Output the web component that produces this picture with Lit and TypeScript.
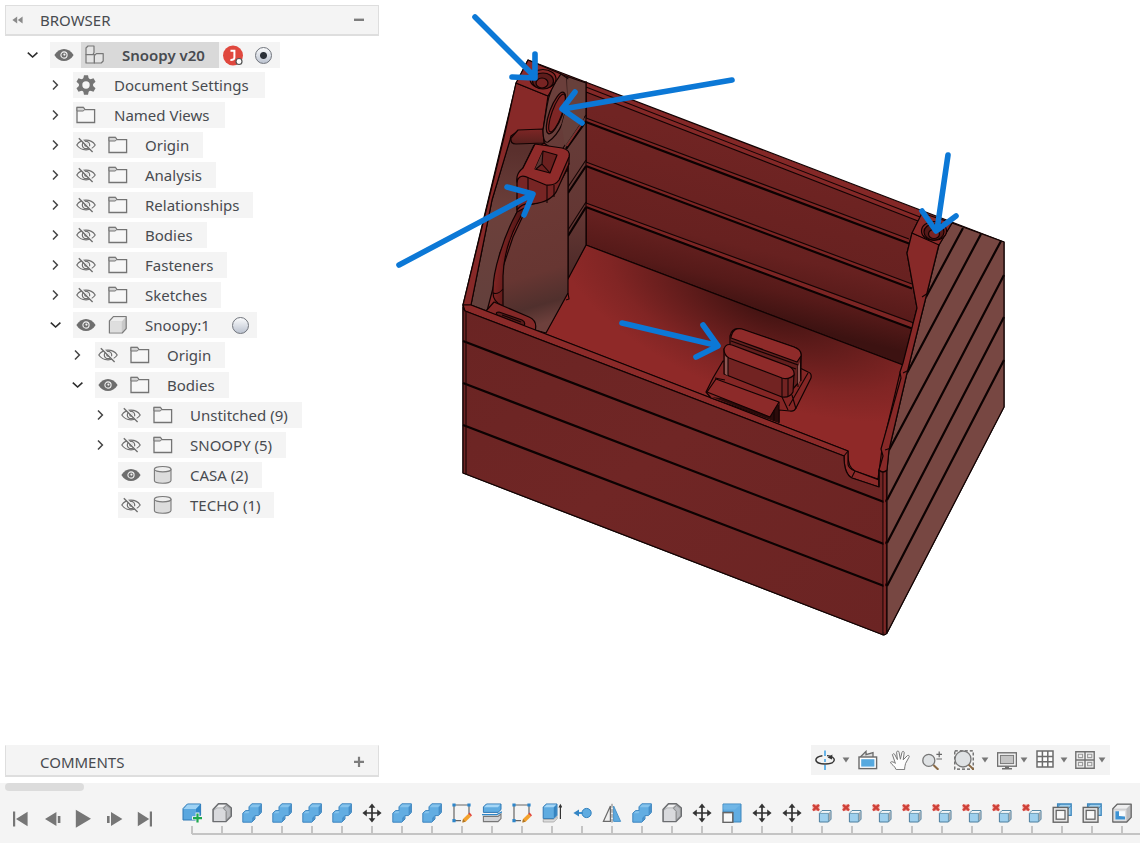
import { LitElement, html, svg, css, nothing, TemplateResult } from "lit";
import { customElement, property } from "lit/decorators.js";

type Art = TemplateResult;

const GREY = "#767676";

/* ---------- 20 x 20 glyphs ---------- */
const art: Record<string, Art> = {
  eye: svg`<path d="M0.4 10C5 2 15 2 19.6 10C15 18 5 18 0.4 10Z" fill="#6e6e6e"/>
    <circle cx="10" cy="10" r="3.1" fill="#6e6e6e" stroke="#f4f4f4" stroke-width="1.1"/><circle cx="10.4" cy="9.6" r="1.1" fill="#f4f4f4"/>`,
  eyeOff: svg`<g fill="none" stroke="#6f6f6f" stroke-width="1.2"><path d="M0.8 10C5 3.6 15 3.6 19.2 10C15 16.4 5 16.4 0.8 10Z"/>
    <circle cx="10" cy="10" r="3.7"/><circle cx="10" cy="10" r="1.2"/></g>
    <path d="M3.8 2.6L17.4 16.2" stroke="#f4f4f4" stroke-width="1.6"/><path d="M2.8 3.2L16.6 17" stroke="#6f6f6f" stroke-width="1.4"/>`,
  folder: svg`<path d="M1 17.5V2.4H7.4L9 4.6H18.6V17.5Z" fill="#f7f7f7" stroke="#747474" stroke-width="1.3"/>
    <path d="M1 2.4H7.4L8.6 4.4L7.4 6H1Z" fill="#d4d4d4" stroke="#747474" stroke-width="1"/>`,
  gear: svg`<g fill="#757575"><circle cx="10" cy="10" r="7.2"/>
    ${[0, 60, 120, 180, 240, 300].map(a => svg`<path d="M7.2 4L8 0.2H12L12.8 4Z" transform=${`rotate(${a} 10 10)`}/>`)}</g>
    <circle cx="10" cy="10" r="3.7" fill="#f5f5f5"/>`,
  assembly: svg`<g fill="#e4e4e4" stroke="#777" stroke-width="1.2" stroke-linejoin="round">
    <path d="M1 9.6V3L3 1H9V7.6L8 9.6Z"/><path d="M1 9.6H9.4V18H1Z"/><path d="M9.4 18V10.6L11.4 8.6H18.2V16L16.2 18Z"/></g>`,
  component: svg`<path d="M1.4 18V6L5.4 1.6H18.2V13.6L14.2 18Z" fill="#c9c9c9" stroke="#7a7a7a" stroke-width="1.2" stroke-linejoin="round"/>
    <path d="M2 6.4H13.8L17.6 2.2H5.8Z" fill="#eee"/><path d="M2 6.4H13.8V17.4H2Z" fill="#dedede"/>`,
  body: svg`<path d="M1.4 4.4V15.6C1.4 19.2 18 19.2 18 15.6V4.4Z" fill="#dcdcdc" stroke="#7a7a7a" stroke-width="1.1"/>
    <ellipse cx="9.7" cy="4.2" rx="8.3" ry="2.7" fill="#eee" stroke="#7a7a7a" stroke-width="1.1"/>`,
  right: svg`<path d="M7 5.4L11.4 10L7 14.6" fill="none" stroke="#444" stroke-width="1.5"/>`,
  down: svg`<path d="M4.8 7.6L9.6 12L14.4 7.6" fill="none" stroke="#2c2c2c" stroke-width="1.6"/>`,
  collapse: svg`<path d="M9.2 6.4V13.6L4.4 10ZM14.6 6.4V13.6L9.8 10Z" fill="#8a8a8a"/>`,
  minus: svg`<path d="M5 8.6H15V11H5Z" fill="#7d7d7d"/>`,
  plus: svg`<path d="M5 8.8H8.9V4.8H11.1V8.8H15V11H11.1V15H8.9V11H5Z" fill="#7d7d7d"/>`,
  /* navigation bar */
  orbit: svg`<path d="M10 0.5V6M10 9V12M10 15V20" stroke="#3aa0e6" stroke-width="1.5"/>
    <path d="M12 5.6C22 6.4 22 13.8 10 14C-2 13.8 -1.4 6.8 7.4 5.7" fill="none" stroke="#333" stroke-width="1.4"/>
    <path d="M12.6 7.4L17.4 4.6L17 9.6Z" fill="#333"/>`,
  lookAt: svg`<path d="M2.4 7L8 1.4V4.6L15 2.6V7" fill="#dcdcdc" stroke="#6a6a6a" stroke-width="1.3"/>
    <rect x="1" y="7" width="17.6" height="11.6" fill="#fff" stroke="#6a6a6a" stroke-width="1.4"/><rect x="3.2" y="9.2" width="13.2" height="7.4" fill="#56a9df"/>`,
  hand: svg`<path d="M6.2 19.6C4.6 15.6 1.4 14.6 0.4 12.4C1.8 11 4 12.2 5.4 13.4L2.4 4.6C3.4 3 4.6 3.8 5 5L7.4 9.6L6.6 2.2C7.2 0.4 8.8 0.8 9 2.2L10.4 9.2L12 2.2C12.8 0.8 14.4 1.4 14.2 2.8L13.2 9.8L17.4 5.6C18.8 5 19.8 6 19 7.2L15.6 13.4C15 16 14.6 17.4 14.6 19.6Z" fill="#fdfdfd" stroke="#777" stroke-width="1"/>`,
  zoom: svg`<circle cx="6.8" cy="10.4" r="6" fill="#dfe2e4" stroke="#777" stroke-width="1.3"/><path d="M11.4 15L16.4 19.8" stroke="#8a6a45" stroke-width="2"/>
    <path d="M14.4 4.4H20M17.2 1.6V7.2M14.4 9H20" stroke="#666" stroke-width="1.2"/>`,
  fit: svg`<rect x="0.8" y="0.8" width="18.4" height="18.4" fill="none" stroke="#555" stroke-width="1.2" stroke-dasharray="3 2"/>
    <circle cx="9" cy="9" r="8" fill="#dfe2e4" stroke="#777" stroke-width="1.3"/><path d="M14.6 14.6L20 20" stroke="#8a6a45" stroke-width="2"/>`,
  display: svg`<rect x="0.6" y="2.8" width="18.8" height="13.4" fill="#f6f6f6" stroke="#707070" stroke-width="1.4"/>
    <rect x="3.4" y="5.4" width="13.2" height="8.2" fill="#c4c4c4" stroke="#777" stroke-width="1"/><path d="M8 16.4H12V18H15V19.6H5V18H8Z" fill="#707070"/>`,
  grid: svg`<path d="M2 1H18V17H2ZM2 6.4H18M2 11.8H18M7.4 1V17M12.8 1V17" fill="#fdfdfd" stroke="#6c6c6c" stroke-width="1.5"/>`,
  views: svg`<path d="M0.8 1.8H19.2V18.2H0.8ZM10 1.8V18.2M0.8 10H19.2" fill="#f2f2f2" stroke="#707070" stroke-width="1.4"/>
    <path d="M3.4 4.2H7.6V7.6H3.4ZM12.6 4.2H16.8V7.6H12.6ZM3.4 12.4H7.6V15.8H3.4ZM12.6 12.4H16.8V15.8H12.6Z" fill="#eee" stroke="#9a9a9a" stroke-width="1.1"/>`,
  /* playback */
  first: svg`<path d="M2 2.6H4.2V17.4H2ZM16.6 2.8V17.2L5 10Z" fill="${GREY}"/>`,
  prev: svg`<path d="M14.4 3V17L3 10ZM15.8 7H18.4V14H15.8Z" fill="${GREY}"/>`,
  play: svg`<path d="M2.8 0.8L18 9.8L2.8 18.8Z" fill="${GREY}"/>`,
  next: svg`<path d="M7 3V17L18.4 10ZM3 7H5.6V14H3Z" fill="${GREY}"/>`,
  last: svg`<path d="M14.8 2.6H17V17.4H14.8ZM2.8 2.8V17.2L14.2 10Z" fill="${GREY}"/>`,
  /* timeline features */
  newComp: svg`<path d="M1 17V5.6L5.4 1H18.6V12L14 17Z" fill="#5aa7df" stroke="#2f78b4" stroke-width="1"/><path d="M1.6 6H14L18 1.6H5.6Z" fill="#9ed2f4"/>
    <path d="M14 6L18.4 1.6V12L14 16.6Z" fill="#2f86c9"/>
    <path d="M13.6 9.6H17.4V13.2H20.6V16.8H17.4V20H13.6V16.8H10V13.2H13.6Z" fill="#f4f4f4"/><path d="M14.4 10.6H16.6V14H20V16.2H16.6V19.6H14.4V16.2H11V14H14.4Z" fill="#1fa84e"/>`,
  form: svg`<path d="M1 18.6V6.4L6.4 0.8H14.4L19.4 5V13L14 18.6Z" fill="#a4a6a8" stroke="#6b6d70" stroke-width="1.4" stroke-linejoin="round"/>
    <path d="M2 18V7.6L5 5.2H10.6L13.4 8.2V18Z" fill="#d9dadd"/><path d="M2.4 6.4L6.8 1.8H14L10.6 4.6H5Z" fill="#f1f1f2"/><path d="M14.4 17V8.4L11.6 5.2L14.6 2.4L18.4 5.6V13Z" fill="#b9bbbf" stroke="#85878a" stroke-width=".7"/>`,
  combine: svg`<path d="M0.8 19.2V10.2L3.6 7.6H7V3.8L9.8 0.8H19.4V9.4L16.4 12.6H13V16L9.8 19.2Z" fill="#62ade2" stroke="#3f86bf" stroke-width="1"/>
    <path d="M7.8 4.2H16L18.6 1.4H10.2ZM1.6 10.2H6.6L7.2 8.2H4Z" fill="#86c3ec"/><path d="M16.6 12V4.4L18.9 1.8V9.2ZM10.200 18.400V15L12.4 12.800V15.8Z" fill="#468fc9"/>`,
  move: svg`<path d="M10 3V17M3 10H17" stroke="#333" stroke-width="1.7"/><path d="M10 0.4L13.4 4.8H6.6ZM10 19.6L13.4 15.2H6.6ZM0.4 10L4.8 6.6V13.4ZM19.6 10L15.2 6.6V13.4Z" fill="#333"/>`,
  sketch: svg`<path d="M2 2H17V12M2 2V17.6H9" fill="none" stroke="#666" stroke-width="1.2"/>
    <path d="M0.4 0.4H3.6V3.6H0.4ZM15.4 0.4H18.6V3.6H15.4ZM0.4 16H3.6V19.2H0.4Z" fill="#2d86cb"/>
    <path d="M10.4 19.4L11 16L16.4 10.8L19 13.4L13.6 18.8Z" fill="#f3a12c"/><path d="M16.4 10.8L17.6 9.6L20 12.2L19 13.4Z" fill="#e2433a"/><path d="M10.4 19.4L11 16L13.6 18.8Z" fill="#a9762c"/>`,
  split: svg`<path d="M1.4 9.4V4L4.4 1H19V6.6L16 9.4Z" fill="#5fabe0" stroke="#2f78b4" stroke-width="1"/><path d="M2 4.2H16L18.2 1.6H4.8Z" fill="#a5d6f6"/>
    <path d="M1.4 13.4V18.6H16L19 15.6V11L16 13.4Z" fill="#d2d3d5" stroke="#777" stroke-width="1.1"/><path d="M0 11.6H15L20 8.8" fill="none" stroke="#2e86c8" stroke-width="1.3"/>`,
  extrude: svg`<path d="M1.2 15.6V4L4.4 1H15V12.4L11.8 15.6Z" fill="#5fabe0" stroke="#2f78b4" stroke-width="1"/><path d="M1.8 4.2H11.6L14.4 1.6H4.8Z" fill="#a5d6f6"/><path d="M11.8 4.4L14.6 1.8V12.2L11.8 15Z" fill="#3583c0"/>
    <path d="M1.2 16.4V19H11.8L15.2 15.6V13.4L11.8 16.4Z" fill="#ddd" stroke="#999" stroke-width=".7"/><path d="M18.4 3V16" stroke="#333" stroke-width="1.2"/><path d="M18.4 0.8L20.4 4.6H16.4Z" fill="#333"/>`,
  remove: svg`<path d="M0.6 1.4H7.4V7.8H0.6Z" fill="#f0a29b"/><path d="M1 1.8L7 7.4M7 1.8L1 7.4" stroke="#cf4138" stroke-width="2.3"/>
    <path d="M7.4 19V10.4L10 7.6H19V16.2L16.4 19Z" fill="#9fd0ee" stroke="#4d7f9e" stroke-width="1"/><path d="M7.8 10.2H16.4L18.6 8H10.2Z" fill="#f2f6f8"/><path d="M16.4 10.4L18.6 8.2V16L16.4 18.4Z" fill="#a8aaac"/><path d="M7.4 10.4H16.4V19" fill="none" stroke="#5f8faa" stroke-width=".8"/>`,
  point: svg`<path d="M6 10H13" stroke="#3d92d2" stroke-width="2"/><circle cx="14.6" cy="10" r="4.6" fill="#5fabe0" stroke="#2f7fbd" stroke-width="1"/><path d="M1.4 10L7 6.4V13.6Z" fill="#3485c4"/>`,
  mirror: svg`<path d="M8.4 3V18.4H1.4Z" fill="#f0f0f0" stroke="#6b6b6b" stroke-width="1.2"/><path d="M11.6 3V18.4H18.6Z" fill="#5fabe0" stroke="#4b93c8" stroke-width="1"/><path d="M10 0.8V19.6" stroke="#777" stroke-width="1" stroke-dasharray="4 1"/>`,
  scale: svg`<path d="M1 1H19V19H11V9H1Z" fill="#62ade2" stroke="#3c86bd" stroke-width="1"/><path d="M1.4 1.4H18.6L13 6.600H1.4Z" fill="#70b6e6"/><rect x="1" y="9.6" width="9.8" height="9.8" fill="#f8f8f8" stroke="#666" stroke-width="1.5"/>`,
  offset: svg`<path d="M5.6 4.4V1H19.2V12.4H16" fill="#9fd0ee" stroke="#3c86bd" stroke-width="1.3"/><path d="M5.6 4L8.4 1M16 6L19 2.6" stroke="#3c86bd" stroke-width="1"/>
    <rect x="1.2" y="4.4" width="14.8" height="14.8" fill="#e6e6e6" stroke="#666" stroke-width="1.4"/><rect x="4.2" y="7.4" width="8.8" height="8.8" fill="#f8f8f8" stroke="#666" stroke-width="1.3"/>`,
  shell: svg`<path d="M0.8 19V5.8L5.2 1.2H19.2V14.4L14.8 19Z" fill="#b9babc" stroke="#666" stroke-width="1.3" stroke-linejoin="round"/>
    <path d="M1.8 5.8H14.4L18 2H5.6Z" fill="#eeeeef"/><path d="M1.6 6.4H14.4V18.2H1.6Z" fill="#dededf"/><path d="M3.4 8.2H13V16.6H3.4Z" fill="#f7fbfe"/><path d="M3.4 8.2H7V13L13 13.4V16.6H3.4Z" fill="#3d92d2"/>`,
};

const icon = (name: string) =>
  html`<svg class="icon" viewBox="0 0 20 20" width="20" height="20" aria-hidden="true">${art[name]}</svg>`;

/* ---------- 3D model view ---------- */
@customElement("model-view")
class ModelView extends LitElement {
  static styles = css`
    :host { display: block; min-width: 0; min-height: 0; }
    svg { display: block; width: 100%; height: 100%; }
    .f { stroke: #120303; stroke-width: 1.2; stroke-linejoin: round; }
    .g { fill: none; stroke: #0c0202; stroke-width: 2.2; }
    .n { fill: none; stroke: #140404; stroke-width: 1.1; }
    .arrow { fill: none; stroke: #0c78d6; stroke-width: 5.6; stroke-linecap: round; stroke-linejoin: round; }
  `;
  render() {
    return html`<svg viewBox="379 0 761 745" preserveAspectRatio="xMidYMid meet" role="img" aria-label="Model">
      <defs>
        <linearGradient id="front" x1="0" y1="0" x2="1" y2="1"><stop offset="0" stop-color="#6a2423"/><stop offset=".45" stop-color="#702625"/><stop offset="1" stop-color="#6b2423"/></linearGradient>
        <linearGradient id="back" gradientUnits="userSpaceOnUse" x1="765" y1="150" x2="727" y2="310"><stop offset="0" stop-color="#702423"/><stop offset=".6" stop-color="#672120"/><stop offset=".82" stop-color="#561a19"/><stop offset="1" stop-color="#3c1211"/></linearGradient>
        <radialGradient id="floor" gradientUnits="userSpaceOnUse" cx="0" cy="0" r="1" gradientTransform="translate(765 303) rotate(21) scale(220 95)"><stop offset="0" stop-color="#3c1110"/><stop offset=".4" stop-color="#611c1b"/><stop offset=".75" stop-color="#812524"/><stop offset="1" stop-color="#8f2928"/></radialGradient>
        <linearGradient id="wall" gradientUnits="userSpaceOnUse" x1="520" y1="200" x2="555" y2="320"><stop offset="0" stop-color="#6c3935"/><stop offset=".6" stop-color="#673632"/><stop offset=".85" stop-color="#50302d"/><stop offset="1" stop-color="#6d403c"/></linearGradient>
        <linearGradient id="inner" gradientUnits="userSpaceOnUse" x1="495" y1="150" x2="485" y2="310"><stop offset="0" stop-color="#5a302d"/><stop offset=".4" stop-color="#6c403b"/><stop offset="1" stop-color="#63403c"/></linearGradient>
        <linearGradient id="panel" gradientUnits="userSpaceOnUse" x1="575" y1="80" x2="577" y2="275"><stop offset="0" stop-color="#69403c"/><stop offset=".7" stop-color="#633633"/><stop offset="1" stop-color="#4d2a28"/></linearGradient>
        <linearGradient id="flap" x1="0" y1="0" x2="0" y2="1"><stop offset="0" stop-color="#7e2625"/><stop offset="1" stop-color="#57201e"/></linearGradient>
        <linearGradient id="strip" gradientUnits="userSpaceOnUse" x1="497" y1="270" x2="512" y2="272"><stop offset="0" stop-color="#7d2423"/><stop offset="1" stop-color="#551817"/></linearGradient>
      </defs>

      <!-- silhouette -->
      <path class="f" fill="#842827" d="M528 60L1004 242V407L887 633Q885 636 881 634L463 473V305L516 84Z"/>

      <!-- back wall -->
      <path class="f" fill="url(#back)" d="M586 92L918 221L912 234L907 253L917 308L903 365L586 245Z"/>
      <path class="n" d="M586 87L920 217M586 81V246"/>
      <path d="M586 118L909 239V243L586 122ZM586 162L912 284V288L586 166ZM586 203L912 323V328L586 207Z" fill="#7c2524"/>
      <path class="n" d="M586 118L909 239M586 162L912 284M586 203L914 323"/>
      <path class="g" d="M586 122L909 243.500M586 166L912 288.500M586 207L912 328.500"/>

      <!-- floor -->
      <path class="f" fill="url(#floor)" d="M586 245L903 365L900 373L882 449L878 479L855 471Q847 467 848 451L540 332L550 325L567 294V279Z"/>

      <!-- left side wall -->
      <path class="f" fill="url(#panel)" d="M560 74L586 83V245L568 279V160L544 143L540 110Z"/>
      <path class="g" d="M586 121L566 149M586 166L568 193M586 207L568 236"/>
      <path class="n" d="M586 115L563 148M586 160L568 187M586 202L568 230M568 77L567 84"/>
      <path d="M584 121L567 146" stroke="#8b2a29" stroke-width="1.200"/>

      <path class="f" fill="url(#inner)" d="M510 139L544 143L532 152L518 184L517 212L500 253L493 288L487 311L471 305L492 200Z"/>
      <path class="n" d="M534 145L518 178"/>
      <path class="f" fill="url(#wall)" d="M528 205Q551 201 558 186L568 168V293L546 333L535 330L500 308L503 267L513 237Z"/>
      <path class="n" d="M568 293L569 299L566 300"/>

      <!-- handle strip -->
      <path class="f" fill="url(#strip)" d="M517 212Q507 230 500 253Q493 275 493 290Q492 302 503 306V276Q504 246 520 218Q524 208 532 204Z"/>
      <path class="n" d="M493 293Q498 295 503 289"/>
      <!-- lower clip base -->
      <path class="f" fill="#842827" d="M486 311L494 302L529 317Q538 321 535 331Z"/>
      <path class="f" fill="#5a1c1b" d="M499 312L522 320Q526 322 524 326L497 315Q495 312 499 312Z"/>
      <path class="n" d="M502 315L521 322"/>

      <!-- handle head -->
      <path class="f" fill="#772524" d="M517 179V210Q523 202 532 204Q553 202 558 188L569 164V155L520 175Z"/>
      <path class="f" fill="#8f2b2a" d="M535 144L562 148Q571 150 569 157L559 180Q555 186 546 185L529 178Q519 173 517 182V177Q518 172 523 168Z"/>
      <path class="f" fill="#6b201f" d="M543 151L557 155L550 173L535 169Z"/>
      <path d="M543 151L542 164L536 169L535 169Z" fill="#5b3532"/>
      <path class="n" d="M543 151L542 164L550 173M542 164L536 169M528 178V204M547 185V203M554 185V197M569 163L567 172"/>

      <!-- left corner post -->
      <path class="f" fill="#872928" d="M516 83L548 96L543 130L518 131L511 136L510 140L492 200L471 305L463 305L505 133Z"/>
      <path class="f" fill="#8b2a29" d="M528 60L561 74L548 96L516 83Z"/>
      <path class="f" fill="url(#flap)" d="M511 138L518 130L543 129L544 143L516 144Q510 144 511 138Z"/>
      <path class="f" fill="#6b3f3b" d="M561 74Q549 90 547 106L543 130Q543 144 548 142Q557 136 562 124L568 102L567 78Z"/>
      <path d="M561.500 126L567.500 103L567 79L584 84V118L565 146Z" fill="#67403b"/>
      <ellipse class="f" fill="#7e2625" cx="556" cy="113" rx="6.500" ry="22" transform="rotate(20 556 113)"/>
      <ellipse class="n" cx="557" cy="113" rx="5" ry="20" transform="rotate(20 557 113)"/>
      <ellipse class="f" fill="#842827" cx="543" cy="79" rx="13" ry="9.500"/>
      <ellipse class="f" fill="#5e1c1b" cx="543" cy="81" rx="10.500" ry="8"/>
      <ellipse class="f" fill="#782423" cx="542" cy="83" rx="6" ry="5"/>

      <!-- front rim and face -->
      <path class="f" fill="#8b2a29" d="M463 305L471 305L848 451V464Q848 468 855 471L879 480V487L852 478Q844 474 844 456L465 311Z"/>
      <path class="f" fill="url(#front)" d="M463 307L465 311L844 456Q844 474 852 478L879 487V470H887V633Q885 636 881 634L463 473Z"/>
      <path class="g" d="M463 341L884 502L886 500M463 383L884 544L886 542M463 425L884 586L886 584"/>
      <path class="n" d="M466 312V474M883 472V634M848 451L844 456M855 471L852 477"/>
      <path d="M884.500 471V632" stroke="#7f2726" stroke-width="1.600"/>

      <!-- side face -->
      <path class="f" fill="#774742" d="M952 223L1004 242V407L887 633V470L889 450L907 373L926 297L939 245Z"/>
      <path class="g" d="M963 228L926 297M981 234L907 373M1001 241L889 450M1004 275L887 500M1004 317L887 543M1004 360L887 586"/>
      <path class="f" fill="#872928" d="M912 233L939 244L926 297L907 373L889 450L887 470Q883 474 879 470L883 456L881 449L901 378L900 372L903 363L917 308L907 253Z"/>
      <path class="f" fill="#8b2a29" d="M922 213L952 223L939 245L912 233Z"/>
      <path class="n" d="M922 297L928 293M903 373L909 370M885 450L891 448M879 470V487"/>
      <ellipse class="f" fill="#7e2625" cx="934" cy="231" rx="12.500" ry="9.500"/>
      <ellipse class="f" fill="#541918" cx="934" cy="232" rx="10" ry="8"/>
      <ellipse class="f" fill="#7a2524" cx="934" cy="234" rx="5.500" ry="4.500"/>

      <!-- centre bracket -->
      <path class="f" fill="#842625" d="M723 361L713 378L706 392L711 398L779 422V410L790 411Q794 412 796 408L811 378Q812 373 808 372L800 368Z"/>
      <path class="n" d="M808 373L789 406M792 395L796 409M782 397L788 410M715 378L725 380"/>
      <path d="M712 397L779 423V405Z" fill="#2b0b0a"/>
      <path class="f" fill="#8c2a29" d="M716 379L779 402L770 417L707 392Z"/>
      <path class="n" d="M779 402V423M774 410V421"/>
      <path class="f" fill="#641f1e" d="M730 352V336Q732 327 741 329L794 347Q802 350 801 356L800 381L792 390Z"/>
      <path class="f" fill="#8f2b2a" d="M731 337Q733 327 742 329L794 347Q802 350 801 356L797 362L731 338Z"/>
      <path class="n" d="M731 341L798 365V387M731 346L796 369M801 356V381"/>
      <path class="f" fill="#722322" d="M724 349V374L782 397Q790 398 793 392L794 374Z"/>
      <path d="M725 356V374L728 376V358Z" fill="#8d5551"/><path d="M798 366L800 362V381L798 385Z" fill="#8d5551"/>
      <path class="f" fill="#8f2b2a" d="M724 349Q726 343 732 345L788 366Q795 369 794 375Q789 380 782 378L729 358Q724 355 724 349Z"/>
      <path class="n" d="M728 358V376M782 378V397M788 378V396"/>

      <!-- annotation arrows -->
      <path class="arrow" d="M475 17L534 76M535 54V78L512 77"/>
      <path class="arrow" d="M732 80L563 109M575 92L562 109L582 123"/>
      <path class="arrow" d="M399 265L531 195M507 187L533 194L524 215"/>
      <path class="arrow" d="M622 323L715 345M703 325L718 346L696 357"/>
      <path class="arrow" d="M948 155L937 230M922 211L936 231L956 216"/>
    </svg>`;
  }
}

/* ---------- tree ---------- */
interface Node {
  label: string; depth: number; open?: boolean; leaf?: boolean;
  eye?: "eye" | "eyeOff"; icon: string; root?: boolean; radio?: boolean;
}
const nodes: Node[] = [
  { label: "Snoopy v20", depth: 0, open: true, eye: "eye", icon: "assembly", root: true, radio: true },
  { label: "Document Settings", depth: 1, icon: "gear" },
  { label: "Named Views", depth: 1, icon: "folder" },
  ...["Origin", "Analysis", "Relationships", "Bodies", "Fasteners", "Sketches"].map(
    label => ({ label, depth: 1, eye: "eyeOff", icon: "folder" }) as Node),
  { label: "Snoopy:1", depth: 1, open: true, eye: "eye", icon: "component", radio: true },
  { label: "Origin", depth: 2, eye: "eyeOff", icon: "folder" },
  { label: "Bodies", depth: 2, open: true, eye: "eye", icon: "folder" },
  { label: "Unstitched (9)", depth: 3, eye: "eyeOff", icon: "folder" },
  { label: "SNOOPY (5)", depth: 3, eye: "eyeOff", icon: "folder" },
  { label: "CASA (2)", depth: 3, leaf: true, eye: "eye", icon: "body" },
  { label: "TECHO (1)", depth: 3, leaf: true, eye: "eyeOff", icon: "body" },
];

const features = [
  "newComp", "form", "combine", "combine", "combine", "combine", "move", "combine", "combine", "sketch", "split",
  "sketch", "extrude", "point", "mirror", "combine", "form", "move", "scale", "move", "move",
  ...Array(8).fill("remove"), "offset", "offset", "shell",
];

const shared = css`
  * { box-sizing: border-box; }
  button { appearance: none; border: 0; padding: 0; margin: 0; background: none; color: inherit; font: inherit; display: flex; align-items: center; justify-content: center; flex: none; cursor: pointer; }
  .icon { display: block; flex: none; }
`;

@customElement("tree-row")
class TreeRow extends LitElement {
  @property({ attribute: false }) node!: Node;
  static styles = [shared, css`
    :host { display: block; }
    .row { display: flex; align-items: center; gap: 5px; height: 30px; }
    .d0 { padding-left: 21px; }
    .d1 { padding-left: 44px; }
    .d2 { padding-left: 66px; }
    .d3 { padding-left: 89px; }
    .toggle, .blank { width: 24px; height: 26px; flex: none; }
    .chip { display: flex; align-items: center; height: 26px; padding: 0 14px 0 3px; background: #f4f4f4; }
    .vis { margin-right: 12px; }
    .name { display: flex; align-items: center; gap: 17px; height: 26px; white-space: nowrap; }
    .wide { gap: 18px; padding-right: 2px; }
    .root .chip { padding-right: 8px; }
    .root .vis { margin: 0 7px 0 1px; }
    .root .name { background: #d9d9d9; padding: 0 14px 0 4px; font-weight: 600; margin-right: 4px; }
    .avatar { display: block; margin-right: 9px; }
    input { appearance: none; width: 17px; height: 17px; margin: 0; border: 1px solid #70747c; border-radius: 50%; background: linear-gradient(#fafbfc, #bcc3d0); }
    input:checked { background: radial-gradient(circle, #2b3038 0 3px, transparent 4px), linear-gradient(#fafbfc, #bcc3d0); }
    .sub { margin-left: 22px; margin-right: -6px; }
    .root input { margin: 0 0 0 2px; }
  `];
  render() {
    const n = this.node;
    return html`<div class="row d${n.depth} ${n.root ? "root" : ""}">
      ${n.leaf ? html`<span class="blank"></span>` : html`<button class="toggle" aria-label=${`Toggle ${n.label}`}>${icon(n.open ? "down" : "right")}</button>`}
      <div class="chip">
        ${n.eye ? html`<button class="vis" aria-label=${`Visibility of ${n.label}`}>${icon(n.eye)}</button>` : nothing}
        <span class="name ${n.eye ? "" : "wide"}">${icon(n.icon)}<span>${n.label}</span></span>
        ${n.root ? html`<svg class="avatar" width="21" height="21" viewBox="0 0 21 21" aria-hidden="true">
          <circle cx="10" cy="10.500" r="10" fill="#e0483e"/>
          <path d="M7.500 5.800H11.400V12.400Q11.400 15.200 7.400 15" fill="none" stroke="#fff" stroke-width="2"/>
          <circle cx="16" cy="16.500" r="3" fill="#fff" stroke="#555" stroke-width="1.200"/></svg>` : nothing}
        ${n.radio ? html`<input type="radio" class=${n.root ? "" : "sub"} .checked=${!!n.root} aria-label=${`Activate ${n.label}`}>` : nothing}
      </div>
    </div>`;
  }
}

@customElement("app-root")
class AppRoot extends LitElement {
  static styles = [shared, css`
    :host { display: flex; flex-direction: column; min-height: 100vh; background: #fff; color: #484b50; font: 15px/20px "Noto Sans", "Open Sans", sans-serif; overflow: hidden; }
    .work { flex: 1; display: grid; grid-template-columns: 379px minmax(0, 1fr); grid-template-rows: minmax(0, 1fr) auto; }
    .side { padding: 5px 0 0 5px; }
    .panel { display: flex; align-items: center; height: 31px; background: #f4f4f4; border: 1px solid #dedede; border-bottom-width: 2px; padding: 0 9px 0 2px; }
    .panel h2 { flex: 1; margin: 0 0 0 12px; font: inherit; }
    .comments { margin-left: 5px; height: 32px; border-top-color: #f4f4f4; padding-top: 2px; }
    .comments h2 { margin-left: 32px; }
    .tree { margin: 4px 0 0 -5px; }
    .navwrap { display: flex; justify-content: flex-end; align-items: flex-start; padding-right: 30px; }
    .nav { display: flex; align-items: center; height: 30px; padding: 0 4px; gap: 12px; background: #f3f3f3; }
    .pair { display: flex; align-items: center; gap: 7px; margin-right: -4px; }
    .tight { gap: 3px; margin-right: -5px; }
    .mid { gap: 5px; margin-right: -5px; }
    .nav > :last-child { margin-right: 0; }
    .caret { width: 8px; height: 20px; }
    .timeline { background: #f4f4f4; margin-top: 6px; height: 60px; display: grid; grid-template-columns: 177px minmax(0, 1fr); grid-template-rows: 8px 52px; }
    .thumb { width: 79px; height: 8px; margin-left: 5px; border-radius: 4px; background: #dcdcdc; }
    .play { grid-row: 2; display: flex; gap: 11px; padding: 18px 0 0 11px; align-items: flex-start; }
    .track { grid-row: 2; display: flex; overflow: hidden; height: 44px; padding-top: 12px; background: linear-gradient(#c4c4c4, #c4c4c4) 15px 100% / 100% 2px no-repeat; }
    .feature { width: 30px; height: 32px; flex-direction: column; justify-content: flex-start; }
    .feature::after { content: ""; width: 2px; height: 8px; margin-top: 3px; background: #c4c4c4; }
  `];
  render() {
    const caret = (label: string) => html`<button class="caret" aria-label=${label}><svg width="8" height="6" viewBox="0 0 8 6" aria-hidden="true"><path d="M0.600 0.400H7.400L4 5.600Z" fill="#777"/></svg></button>`;
    const tool = (name: string, label: string) => html`<button aria-label=${label}>${icon(name)}</button>`;
    return html`
      <main class="work">
        <section class="side">
          <div class="panel"><button aria-label="Collapse">${icon("collapse")}</button><h2>BROWSER</h2><button aria-label="Minimize">${icon("minus")}</button></div>
          <div class="tree">${nodes.map(n => html`<tree-row .node=${n}></tree-row>`)}</div>
        </section>
        <model-view></model-view>
        <section class="panel comments"><h2>COMMENTS</h2><button aria-label="Expand">${icon("plus")}</button></section>
        <div class="navwrap">
          <nav class="nav">
            <span class="pair">${tool("orbit", "Orbit")}${caret("Orbit options")}</span>
            ${tool("lookAt", "Look at")}${tool("hand", "Pan")}${tool("zoom", "Zoom")}
            <span class="pair">${tool("fit", "Fit")}${caret("Fit options")}</span>
            <span class="pair tight">${tool("display", "Display")}${caret("Display options")}</span>
            <span class="pair mid">${tool("grid", "Grid")}${caret("Grid options")}</span>
            <span class="pair tight">${tool("views", "Viewports")}${caret("Viewport options")}</span>
          </nav>
        </div>
      </main>
      <footer class="timeline">
        <div class="thumb"></div>
        <div class="play">${["first", "prev", "play", "next", "last"].map(n => tool(n, n))}</div>
        <div class="track">${features.map(f => html`<button class="feature" aria-label=${f}>${icon(f)}</button>`)}</div>
      </footer>`;
  }
}
